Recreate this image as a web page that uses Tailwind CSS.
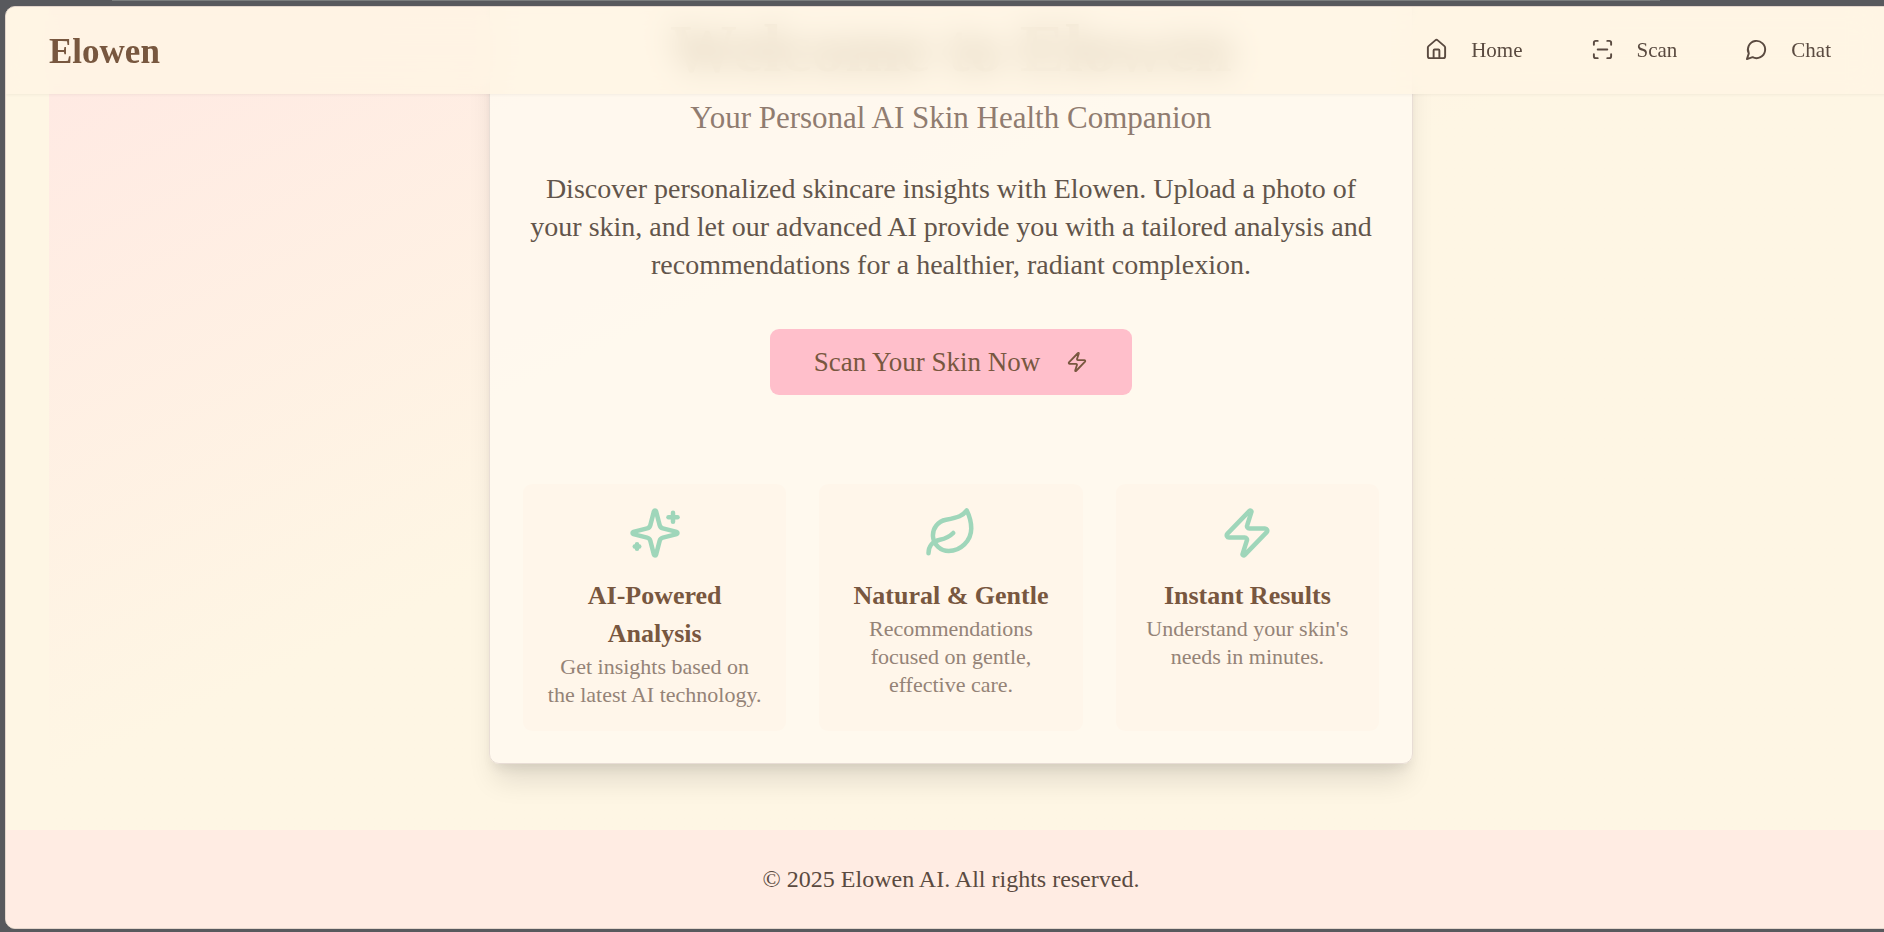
<!DOCTYPE html>
<html lang="en">
<head>
<meta charset="utf-8">
<meta name="viewport" content="width=device-width, initial-scale=1">
<title>Elowen</title>
<script src="https://cdn.jsdelivr.net/npm/@tailwindcss/browser@4"></script>
</head>
<body class="relative flex min-h-screen overflow-hidden bg-[#58595d] pt-[6px] pb-[3px] pl-[5px] font-['Liberation_Serif',serif] text-[#5a4a40]">
  <div class="absolute top-0 right-56 left-28 h-px bg-[#7a7d7d]"></div>
  <div class="relative -mr-[13px] flex flex-1 flex-col overflow-hidden rounded-[10px] border border-[#e3d5cb] bg-[#fef6e4]">
    <header class="absolute inset-x-0 top-0 z-10 flex h-[87px] items-center justify-between bg-[#fff5e4]/80 px-[43px] shadow-[0_1px_3px_rgba(0,0,0,0.05)] backdrop-blur-[16px]">
      <a href="#" class="pt-[2px] text-[35px] leading-[44px] font-bold text-[#78573f]">Elowen</a>
      <nav class="flex gap-[24px] pb-[2px] text-[21px] leading-[28px]">
        <a href="#" class="flex items-center gap-[23px] px-[22px]">
          <svg class="size-[23px]" viewBox="0 0 24 24" fill="none" stroke="currentColor" stroke-width="2" stroke-linecap="round" stroke-linejoin="round"><path d="M15 21v-8a1 1 0 0 0-1-1h-4a1 1 0 0 0-1 1v8"/><path d="M3 10a2 2 0 0 1 .709-1.528l7-5.999a2 2 0 0 1 2.582 0l7 5.999A2 2 0 0 1 21 10v9a2 2 0 0 1-2 2H5a2 2 0 0 1-2-2z"/></svg>
          Home
        </a>
        <a href="#" class="flex items-center gap-[23px] px-[22px]">
          <svg class="size-[23px]" viewBox="0 0 24 24" fill="none" stroke="currentColor" stroke-width="2" stroke-linecap="round" stroke-linejoin="round"><path d="M3 7V5a2 2 0 0 1 2-2h2"/><path d="M17 3h2a2 2 0 0 1 2 2v2"/><path d="M21 17v2a2 2 0 0 1-2 2h-2"/><path d="M7 21H5a2 2 0 0 1-2-2v-2"/><path d="M7 12h10"/></svg>
          Scan
        </a>
        <a href="#" class="flex items-center gap-[23px] px-[22px]">
          <svg class="size-[23px]" viewBox="0 0 24 24" fill="none" stroke="currentColor" stroke-width="2" stroke-linecap="round" stroke-linejoin="round"><path d="M7.9 20A9 9 0 1 0 4 16.1L2 22Z"/></svg>
          Chat
        </a>
      </nav>
    </header>

    <main class="flex-1 px-[43px]">
      <section class="-mt-[23px] flex justify-center bg-linear-to-br from-[#ffe8e3] via-[#fef6e4] via-47% to-[#fef6e4] pb-[66px]">
        <div class="w-full max-w-[924px] rounded-[10px] border border-[#e8ddd5] bg-[#fffaf1]/80 px-[33px] pt-[26px] pb-[32px] text-center shadow-[0_22px_28px_-6px_rgba(0,0,0,0.11),0_8px_12px_-4px_rgba(0,0,0,0.08)]">
          <h1 class="text-[67px] leading-[74px] font-bold text-[#5f4c28]">Welcome to Elowen</h1>
          <p class="mt-[15px] text-[31px] leading-[36px] text-[#907c70]">Your Personal AI Skin Health Companion</p>
          <p class="mt-[34px] text-[28px] leading-[38px] text-[#62554b]">Discover personalized skincare insights with Elowen. Upload a photo of your skin, and let our advanced AI provide you with a tailored analysis and recommendations for a healthier, radiant complexion.</p>
          <button type="button" class="mt-[45px] inline-flex h-[66px] items-center gap-[26px] rounded-[9px] bg-[#ffbfcb] px-[44px] text-[27px] leading-[38px] text-[#78573f]">
            Scan Your Skin Now
            <svg class="size-[22px]" viewBox="0 0 24 24" fill="none" stroke="currentColor" stroke-width="2" stroke-linecap="round" stroke-linejoin="round"><path d="M4 14a1 1 0 0 1-.78-1.63l9.9-10.2a.5.5 0 0 1 .86.46l-1.92 6.02A1 1 0 0 0 13 10h7a1 1 0 0 1 .78 1.63l-9.9 10.2a.5.5 0 0 1-.86-.46l1.92-6.02A1 1 0 0 0 11 14z"/></svg>
          </button>

          <div class="mt-[89px] grid grid-cols-3 gap-[33px]">
            <article class="flex flex-col items-center rounded-[9px] bg-[#fff6ea] p-[22px]">
              <svg class="mb-[17px] size-[54px] text-[#9fd6ba]" viewBox="0 0 24 24" fill="none" stroke="currentColor" stroke-width="2" stroke-linecap="round" stroke-linejoin="round"><path d="M9.937 15.5A2 2 0 0 0 8.5 14.063l-6.135-1.582a.5.5 0 0 1 0-.962L8.5 9.936A2 2 0 0 0 9.937 8.5l1.582-6.135a.5.5 0 0 1 .963 0L14.063 8.5A2 2 0 0 0 15.5 9.937l6.135 1.581a.5.5 0 0 1 0 .964L15.5 14.063a2 2 0 0 0-1.437 1.437l-1.582 6.135a.5.5 0 0 1-.963 0z"/><path d="M20 3v4"/><path d="M22 5h-4"/><path d="M4 17v2"/><path d="M5 18H3"/></svg>
              <h2 class="text-[26px] leading-[38px] font-bold text-[#78573f]">AI-Powered<br>Analysis</h2>
              <p class="text-[22px] leading-[28px] text-[#948377]">Get insights based on the latest AI technology.</p>
            </article>
            <article class="flex flex-col items-center rounded-[9px] bg-[#fff6ea] p-[22px]">
              <svg class="mb-[17px] size-[54px] text-[#9fd6ba]" viewBox="0 0 24 24" fill="none" stroke="currentColor" stroke-width="2" stroke-linecap="round" stroke-linejoin="round"><path d="M11 20A7 7 0 0 1 9.8 6.1C15.5 5 17 4.48 19 2c1 2 2 4.18 2 8 0 5.5-4.78 10-10 10Z"/><path d="M2 21c0-3 1.85-5.36 5.08-6C9.5 14.52 12 13 13 12"/></svg>
              <h2 class="text-[26px] leading-[38px] font-bold text-[#78573f]">Natural &amp; Gentle</h2>
              <p class="text-[22px] leading-[28px] text-[#948377]">Recommendations focused on gentle, effective care.</p>
            </article>
            <article class="flex flex-col items-center rounded-[9px] bg-[#fff6ea] p-[22px]">
              <svg class="mb-[17px] size-[54px] text-[#9fd6ba]" viewBox="0 0 24 24" fill="none" stroke="currentColor" stroke-width="2" stroke-linecap="round" stroke-linejoin="round"><path d="M4 14a1 1 0 0 1-.78-1.63l9.9-10.2a.5.5 0 0 1 .86.46l-1.92 6.02A1 1 0 0 0 13 10h7a1 1 0 0 1 .78 1.63l-9.9 10.2a.5.5 0 0 1-.86-.46l1.92-6.02A1 1 0 0 0 11 14z"/></svg>
              <h2 class="text-[26px] leading-[38px] font-bold text-[#78573f]">Instant Results</h2>
              <p class="text-[22px] leading-[28px] text-[#948377]">Understand your skin's needs in minutes.</p>
            </article>
          </div>
        </div>
      </section>
    </main>

    <footer class="bg-[#ffece3] py-[33px] text-center text-[24px] leading-[32px]">© 2025 Elowen AI. All rights reserved.</footer>
  </div>
</body>
</html>
